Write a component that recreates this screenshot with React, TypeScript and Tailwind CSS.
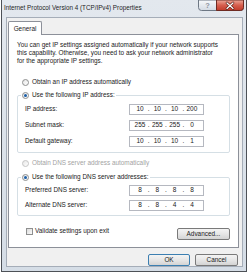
import React from "react";

function Radio({ checked, disabled }: { checked?: boolean; disabled?: boolean }) {
  return (
    <span
      className={
        "flex h-[7px] w-[7px] shrink-0 items-center justify-center rounded-full border bg-gradient-to-br from-[#e6e6e6] to-[#ffffff] " +
        (disabled ? "border-[#c4c4c4]" : "border-[#8e8f8f]")
      }
    >
      {checked && <span className="h-[3px] w-[3px] rounded-full bg-[#1c5fa8]" />}
    </span>
  );
}

function IpBox({ parts }: { parts: string[] }) {
  return (
    <div className="flex h-[11px] w-[75px] items-center justify-between border border-[#b5b8c0] bg-white pl-[3px] pr-[4px] text-[6.5px] leading-none text-[#1a1a1a]">
      {parts.map((p, i) => (
        <React.Fragment key={i}>
          <span className="w-[14px] text-center">{p}</span>
          {i < parts.length - 1 && <span className="w-[3px] text-center">.</span>}
        </React.Fragment>
      ))}
    </div>
  );
}

function Row({ label, parts }: { label: string; parts: string[] }) {
  return (
    <div className="flex h-[11px] items-center">
      <span className="w-[104px] leading-none">{label}</span>
      <IpBox parts={parts} />
    </div>
  );
}

function Btn({ children, def, w }: { children: React.ReactNode; def?: boolean; w: string }) {
  return (
    <div
      className={
        "flex h-[12px] shrink-0 items-center justify-center rounded-[2px] border bg-gradient-to-b from-[#f4f4f4] via-[#e6e6e6] to-[#d4d4d4] text-[6.4px] leading-none text-[#1a1a1a] " +
        w +
        (def ? " border-[#3c7fb1]" : " border-[#7a7a7a]")
      }
    >
      {children}
    </div>
  );
}

function CaptionButtons() {
  return (
    <svg width="46" height="11" viewBox="0 0 46 11" className="block shrink-0">
      <defs>
        <linearGradient id="helpg" x1="0" y1="0" x2="0" y2="1">
          <stop offset="0" stopColor="#f7f9fb" />
          <stop offset="1" stopColor="#d3dae3" />
        </linearGradient>
        <linearGradient id="closeg" x1="0" y1="0" x2="0" y2="1">
          <stop offset="0" stopColor="#eca899" />
          <stop offset="0.5" stopColor="#d65e4e" />
          <stop offset="1" stopColor="#c13b2a" />
        </linearGradient>
      </defs>
      <path d="M0.5 0 V7.5 Q0.5 10.5 3.5 10.5 H42.5 Q45.5 10.5 45.5 7.5 V0 Z" fill="url(#helpg)" stroke="#6d7784" />
      <path d="M18.5 0 V10.5 H42.5 Q45.5 10.5 45.5 7.5 V0 Z" fill="url(#closeg)" stroke="#6e2a22" />
      <text x="9.5" y="8" textAnchor="middle" fontSize="7.5" fontWeight="bold" fill="#8d959f" fontFamily="Liberation Sans, Arial, sans-serif">?</text>
      <path d="M29 3 L35 8.5 M35 3 L29 8.5" stroke="#5a1a12" strokeWidth="2.6" strokeLinecap="round" />
      <path d="M29 3 L35 8.5 M35 3 L29 8.5" stroke="#ffffff" strokeWidth="1.3" strokeLinecap="round" />
    </svg>
  );
}

export default function App() {
  return (
    <div className="h-[276px] w-[248px] overflow-hidden bg-white font-['Liberation_Sans',Arial,sans-serif] text-[#1a1a1a]">
      <div className="ml-[1px] flex h-[272px] w-[246px] flex-col border-x border-b border-[#4d5157] bg-gradient-to-b from-[#e3e8ee] to-[#d5dde6]">
        {/* Title bar */}
        <div className="flex h-[17px] items-start justify-between pr-[2px]">
          <span className="ml-[2px] mt-[3px] whitespace-nowrap text-[6.3px] leading-[10px] text-[#1e1e1e]">
            Internet Protocol Version 4 (TCP/IPv4) Properties
          </span>
          <CaptionButtons />
        </div>
        {/* Client area */}
        <div className="ml-[4px] flex h-[250px] w-[237px] flex-col border border-[#a5adb8] bg-[#f0f0f0] pl-[1px] pt-[3px]">
          <div className="relative z-10 -mb-[1px] flex h-[14px] w-[34px] items-start justify-center rounded-t-[2px] border-x border-t border-[#8c9099] bg-white pt-[3px] text-[6.4px] leading-[8px]">
            General
          </div>
          <div className="flex h-[214px] w-[231px] flex-col border border-[#8c9099] bg-white px-[8px] pt-[6px] text-[6.4px]">
            <div className="whitespace-nowrap leading-[8px]">
              <div>You can get IP settings assigned automatically if your network supports</div>
              <div>this capability. Otherwise, you need to ask your network administrator</div>
              <div>for the appropriate IP settings.</div>
            </div>
            <div className="ml-[5px] mt-[12px] flex h-[10px] items-center gap-[3px] leading-none">
              <Radio />
              <span>Obtain an IP address automatically</span>
            </div>
            <fieldset className="mt-[3px] w-[213px] rounded-[2px] border border-[#d5dfe5]">
              <legend className="ml-[3px] flex h-[10px] items-center gap-[3px] bg-white px-[1px] leading-none">
                <Radio checked />
                <span>Use the following IP address:</span>
              </legend>
              <div className="flex flex-col gap-[5px] pb-[5px] pl-[7px] pt-[4px]">
                <Row label="IP address:" parts={["10", "10", "10", "200"]} />
                <Row label="Subnet mask:" parts={["255", "255", "255", "0"]} />
                <Row label="Default gateway:" parts={["10", "10", "10", "1"]} />
              </div>
            </fieldset>
            <div className="ml-[5px] mt-[5px] flex h-[10px] items-center gap-[3px] leading-none text-[#a3a3a3]">
              <Radio disabled />
              <span>Obtain DNS server address automatically</span>
            </div>
            <fieldset className="mt-[4px] w-[213px] rounded-[2px] border border-[#d5dfe5]">
              <legend className="ml-[3px] flex h-[10px] items-center gap-[3px] bg-white px-[1px] leading-none">
                <Radio checked />
                <span>Use the following DNS server addresses:</span>
              </legend>
              <div className="flex flex-col gap-[4px] pb-[4px] pl-[7px] pt-[3px]">
                <Row label="Preferred DNS server:" parts={["8", "8", "8", "8"]} />
                <Row label="Alternate DNS server:" parts={["8", "8", "4", "4"]} />
              </div>
            </fieldset>
            <div className="mt-[12px] flex w-[213px] items-start justify-between">
              <div className="ml-[9px] mt-[-1px] flex h-[8px] items-center gap-[2px] leading-none">
                <span className="h-[7px] w-[7px] border border-[#8e8f8f] bg-gradient-to-br from-[#dcdcdc] to-[#fafafa]" />
                <span>Validate settings upon exit</span>
              </div>
              <Btn w="w-[53px]">Advanced...</Btn>
            </div>
          </div>
          <div className="mt-[6px] flex justify-end gap-[5px] pr-[4px]">
            <Btn def w="w-[42px]">OK</Btn>
            <Btn w="w-[43px]">Cancel</Btn>
          </div>
        </div>
      </div>
    </div>
  );
}
